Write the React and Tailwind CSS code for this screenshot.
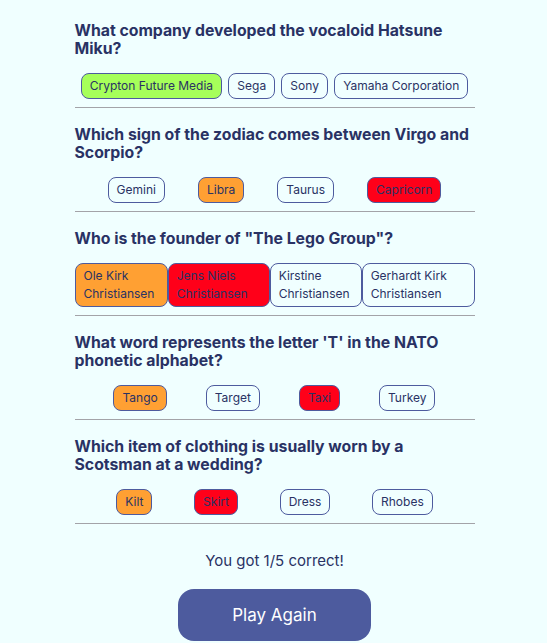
import React from 'react'

const questions = [
  {
    q: 'What company developed the vocaloid Hatsune Miku?',
    answers: [
      { text: 'Crypton Future Media', state: 'correct' },
      { text: 'Sega' },
      { text: 'Sony' },
      { text: 'Yamaha Corporation' },
    ],
  },
  {
    q: 'Which sign of the zodiac comes between Virgo and Scorpio?',
    answers: [
      { text: 'Gemini' },
      { text: 'Libra', state: 'answer' },
      { text: 'Taurus' },
      { text: 'Capricorn', state: 'wrong' },
    ],
  },
  {
    q: 'Who is the founder of "The Lego Group"?',
    answers: [
      { text: 'Ole Kirk Christiansen', state: 'answer' },
      { text: 'Jens Niels Christiansen', state: 'wrong' },
      { text: 'Kirstine Christiansen' },
      { text: 'Gerhardt Kirk Christiansen' },
    ],
  },
  {
    q: "What word represents the letter 'T' in the NATO phonetic alphabet?",
    answers: [
      { text: 'Tango', state: 'answer' },
      { text: 'Target' },
      { text: 'Taxi', state: 'wrong' },
      { text: 'Turkey' },
    ],
  },
  {
    q: 'Which item of clothing is usually worn by a Scotsman at a wedding?',
    answers: [
      { text: 'Kilt', state: 'answer' },
      { text: 'Skirt', state: 'wrong' },
      { text: 'Dress' },
      { text: 'Rhobes' },
    ],
  },
]

// background per answer state
const stateClass = {
  correct: 'bg-[#a6ff5a]',
  answer: 'bg-[#ffa033]',
  wrong: 'bg-[#ff0019]',
}

const Answer = ({ text, state }) => (
  <button
    type="button"
    className={`border border-[#4d5b9e] rounded-lg px-2 py-[3px] text-[12px] leading-[18px] text-left text-[#293264] ${
      stateClass[state] || 'bg-transparent'
    }`}
  >
    {text}
  </button>
)

export default function App() {
  return (
    <div className="min-h-screen bg-[#f0ffff] pl-[2px] font-['Inter',sans-serif]">
      <div className="mx-auto w-[400px] pt-[22px] flex flex-col gap-[18px]">
        {questions.map((item) => (
          <div key={item.q} className="border-b border-[#a3a3a8] pb-2">
            <h2 className="text-[15.8px] leading-[18px] font-bold text-[#293264]">{item.q}</h2>
            <div className="mt-[15px] flex justify-evenly">
              {item.answers.map((a) => (
                <Answer key={a.text} {...a} />
              ))}
            </div>
          </div>
        ))}
      </div>
      <div className="mx-auto w-[400px] flex flex-col items-center">
        <p className="mt-[27px] text-[15px] leading-[20px] text-[#293264]">You got 1/5 correct!</p>
        <button
          type="button"
          className="mt-[18px] w-[193px] h-[52px] rounded-2xl bg-[#4d5b9e] text-white text-[17px] pt-[2px]"
        >
          Play Again
        </button>
      </div>
    </div>
  )
}
